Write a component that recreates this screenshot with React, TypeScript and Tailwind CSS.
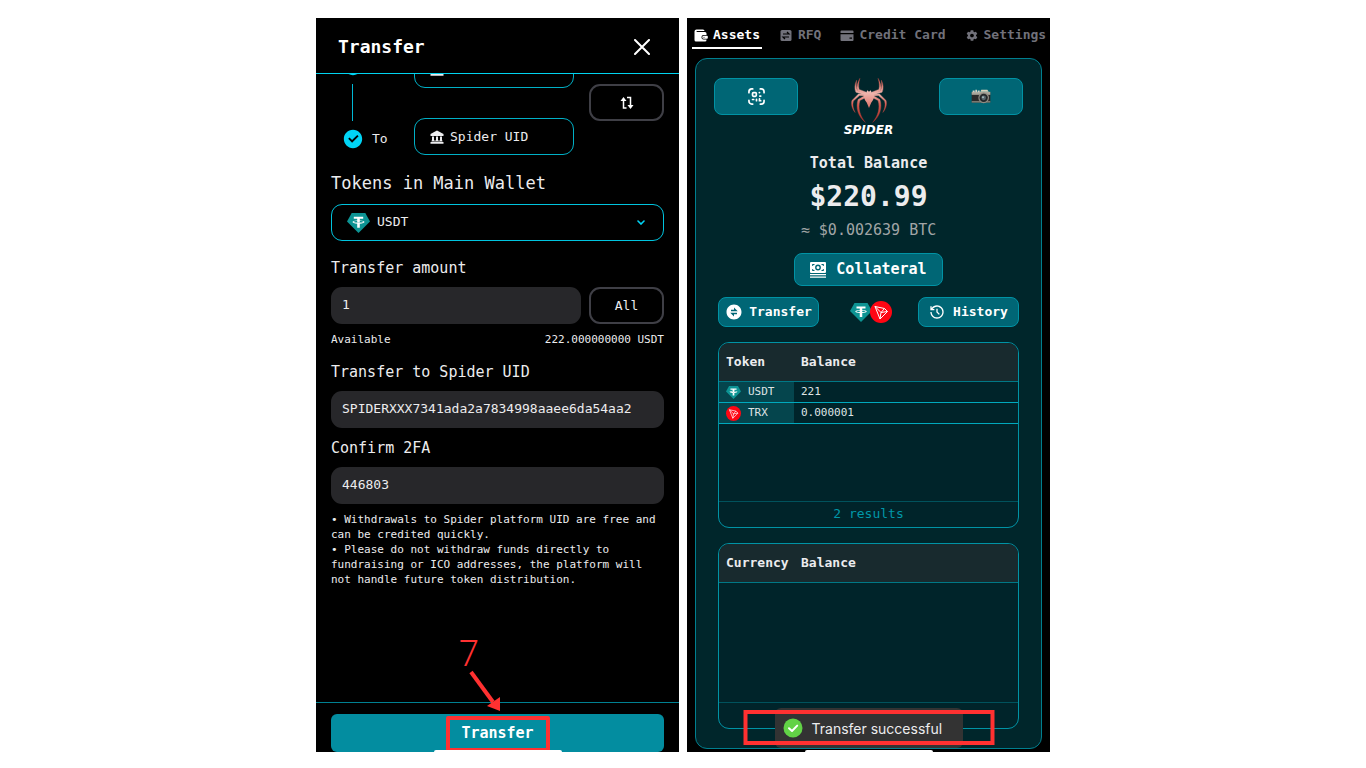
import React, { useState } from 'react';
import { RiCheckboxCircleFill, RiExchangeFill, RiHistoryLine } from 'react-icons/ri';
import { IoMdSettings } from 'react-icons/io';

type TokenRow = {
  symbol: string;
  balance: string;
  icon: React.ReactNode;
};

const UsdtIcon = ({ className }: { className?: string }) => (
  <svg viewBox="0 0 44 38" className={className} aria-hidden="true">
    <path d="M9 0h26l9 16-22 22L0 16z" fill="#0d9494" />
    <path d="M13 7h18v4h-6.500v3c5.500.4 9 1.500 9 3.100s-3.500 2.700-9 3.100V28h-5v-7.800c-5.500-.4-9-1.500-9-3.100s3.500-2.700 9-3.100v-3H13z" fill="#fff" />
    <path d="M12.500 17c1-1 3.500-1.500 7-1.700v2.500h5v-2.500c3.500.2 6 .7 7 1.700-2.500 1.500-16.500 1.500-19 0z" fill="#0d9494" />
  </svg>
);

const TrxIcon = ({ className }: { className?: string }) => (
  <svg viewBox="0 0 44 44" className={className} aria-hidden="true">
    <circle cx="22" cy="22" r="22" fill="#ff0613" />
    <g fill="none" stroke="#fff" strokeWidth="2" strokeLinejoin="round">
      <path d="M10 11l19 4 6 6-15 15z" />
      <path d="M10 11l12 12 7-8M22 23l13-2M22 23l-2 13" />
    </g>
  </svg>
);

const CloseIcon = () => (
  <svg viewBox="0 0 16 16" className="h-4 w-4" fill="none" stroke="currentColor" strokeWidth="2" strokeLinecap="round">
    <path d="M1 1l14 14M15 1L1 15" />
  </svg>
);

const BankIcon = () => (
  <svg viewBox="0 0 14 14" className="h-3.5 w-3.5" fill="currentColor" aria-hidden="true">
    <path d="M7 .5L13.500 4v2H.5V4z" />
    <path d="M2 6.500h2v4H2zM6 6.500h2v4H6zM10 6.500h2v4h-2zM1.500 10.500h11v1h-11zM.5 12h13v1.800H.5z" />
  </svg>
);

const SwapIcon = () => (
  <svg viewBox="0 0 14 14" className="h-3.5 w-3.5" fill="none" stroke="currentColor" strokeWidth="1.500">
    <path d="M3.500 3v9h3M7 1.500h3.500V11" />
    <path d="M3.500 1L6.500 5h-6zM10.500 13l-3-4h6z" fill="currentColor" stroke="none" />
  </svg>
);

const ScanIcon = () => (
  <svg viewBox="0 0 18 18" className="h-[17px] w-[17px]" fill="none" stroke="currentColor" strokeWidth="1.800" strokeLinecap="round">
    <path d="M1 5V4a3 3 0 013-3h1M13 1h1a3 3 0 013 3v1M17 13v1a3 3 0 01-3 3h-1M5 17H4a3 3 0 01-3-3v-1" />
    <rect x="4.800" y="4.800" width="4" height="4" rx="1" />
    <path d="M12 4.800h.2M12.500 8.500h1M4.800 12.200h1.200M9 12v1.500M12.200 11.500v2h1.300" />
  </svg>
);

const CashIcon = () => (
  <svg viewBox="0 0 16 16" className="h-4 w-4" fill="currentColor">
    <path fillRule="evenodd" d="M1 0h14a1 1 0 011 1v9a1 1 0 01-1 1H1a1 1 0 01-1-1V1a1 1 0 011-1zm1.200 2v2h1V3h1.300V2zm9.300 0v1h1.300v1h1V2zM2.200 7v2h2.300V8H3.200V7zm10.600 0v1h-1.300v1h2.300V7zM8 2.600a2.900 2.900 0 100 5.800 2.900 2.900 0 000-5.800zM8 4a1.500 1.500 0 110 3 1.500 1.500 0 010-3z" />
    <path d="M0 12h16v1.200H0zM0 14.500h16v1.200H0z" />
  </svg>
);

const WalletIcon = () => (
  <svg viewBox="0 0 14 14" className="h-3.5 w-3.5" fill="currentColor" aria-hidden="true">
    <path d="M2.500 1.500H9A1.500 1.500 0 0110.500 3H3a.5.5 0 000 1h8a1.500 1.500 0 011.500 1.500V7H9.500a2 2 0 00-2 2v.5a2 2 0 002 2h3V12a1.500 1.500 0 01-1.500 1.500H2A1.500 1.500 0 01.5 12V3.500a2 2 0 012-2z" />
    <path fillRule="evenodd" d="M9.700 7.800H13a.8.8 0 01.8.8V10a.8.8 0 01-.8.8H9.700a1.500 1.500 0 010-3zm.3 1a.5.5 0 100 1 .5.5 0 000-1z" />
  </svg>
);

const RfqIcon = () => (
  <svg viewBox="0 0 14 14" className="h-3.5 w-3.5" aria-hidden="true">
    <rect x="1.500" y="2" width="11" height="11" rx="1.500" fill="currentColor" />
    <path d="M4 6h6L8 4M10 9H4l2 2" fill="none" stroke="#000" strokeWidth="1.200" />
  </svg>
);

const CardIcon = () => (
  <svg viewBox="0 0 14 14" className="h-3.5 w-3.5" fill="currentColor" aria-hidden="true">
    <path d="M1.500 2.500h11a1 1 0 011 1V5H.5V3.500a1 1 0 011-1z" />
    <path fillRule="evenodd" d="M.5 6.200h13V12a1 1 0 01-1 1h-11a1 1 0 01-1-1zM9.500 9.500v1.200H12V9.500z" />
  </svg>
);

const CameraIcon = () => (
  <svg viewBox="0 0 60 44" className="h-[15px] w-5" aria-hidden="true">
    <path d="M2 9h56v31H2z" fill="#2c2b2a" />
    <path d="M2 8h56v9H2z" fill="#a9a69a" />
    <path d="M31 2h18l4 6H28z" fill="#d8d3bd" />
    <path d="M5 4h6v5H5zM13 2h5v7h-5zM20 4h6v5h-6z" fill="#d5d2c6" />
    <path d="M2 36h56v4H2z" fill="#8b887d" />
    <circle cx="38" cy="26" r="16" fill="#8f8c83" />
    <circle cx="38" cy="26" r="12.500" fill="#23282b" />
    <circle cx="38" cy="26" r="7" fill="#56656b" />
    <circle cx="36" cy="24" r="3" fill="#a5b9bd" />
  </svg>
);

const SpiderMark = () => (
  <svg viewBox="54 22 120 146" className="h-12 w-10" aria-hidden="true">
    <defs>
      <linearGradient id="legs" x1="0" y1="22" x2="0" y2="168" gradientUnits="userSpaceOnUse">
        <stop offset="0" stopColor="#c9443a" />
        <stop offset=".35" stopColor="#eeb5ad" />
        <stop offset=".6" stopColor="#d4574d" />
        <stop offset="1" stopColor="#a82c27" />
      </linearGradient>
      <linearGradient id="torso" x1="0" y1="60" x2="0" y2="122" gradientUnits="userSpaceOnUse">
        <stop offset="0" stopColor="#f3c6bf" />
        <stop offset="1" stopColor="#dc6a60" />
      </linearGradient>
    </defs>
    <g transform="translate(114 0) scale(1.18 1) translate(-114 0)">
      <g fill="url(#legs)" stroke="url(#legs)" strokeWidth="1">
        <path d="M106 76L82 63c-3-13 1-28 7-40-3 14-5 25-2 36l20 9zM122 76l24-13c3-13-1-28-7-40 3 14 5 25 2 36l-20 9z" />
        <path d="M105 78L78 68c-5-13-3-27 2-39-1 13-2 24 2 34l24 9zM123 78l27-10c5-13 3-27-2-39 1 13 2 24-2 34l-24 9z" />
        <path d="M104 80L88 79 71 97c-3 14 0 25 5 37-8-11-12-25-9-39l18-21 20 1zM124 80l16-1 17 18c3 14 0 25-5 37 8-11 12-25 9-39l-18-21-20 1z" />
        <path d="M104 86L89 95c-6 25 0 49 15 71-21-20-27-48-20-74l19-13zM124 86l15 9c6 25 0 49-15 71 21-20 27-48 20-74l-19-13z" />
      </g>
      <path d="M109 62l5 5 5-5 2 7c6 2 8 7 7 14-1 9-5 14-8 19l-6 17-6-17c-3-5-7-10-8-19-1-7 1-12 7-14z" fill="url(#torso)" />
    </g>
  </svg>
);

const tabs = [
  { label: 'Assets', icon: <WalletIcon /> },
  { label: 'RFQ', icon: <RfqIcon /> },
  { label: 'Credit Card', icon: <CardIcon /> },
  { label: 'Settings', icon: <IoMdSettings className="h-3.5 w-3.5 pt-px" /> },
];

const tokens: TokenRow[] = [
  { symbol: 'USDT', balance: '221', icon: <UsdtIcon className="h-[13px] w-[15px]" /> },
  { symbol: 'TRX', balance: '0.000001', icon: <TrxIcon className="h-[15px] w-[15px]" /> },
];

const fieldClass = 'h-[37px] w-full min-w-0 rounded-[11px] bg-[#27272a] px-[11px] pb-0.5 text-[13px] text-[#ececee] outline-none';
const tealButton = 'flex items-center justify-center border border-[#0093a5] bg-[#006675] text-white';

const HomeIndicator = () => (
  <div className="absolute bottom-0 left-1/2 h-0.5 w-32 -translate-x-1/2 rounded-t-full bg-white" />
);

const BalanceTable = ({ name, rows, footer }: { name: string; rows: TokenRow[]; footer?: string }) => (
  <section className="flex h-[186px] flex-col overflow-hidden rounded-[11px] border border-[#0093a5] bg-[#00242a]">
    <table className="w-full table-fixed border-collapse text-left">
      <thead>
        <tr className="h-[38px] border-b border-[#007886] bg-[#182a2e] text-[13px] text-[#ececee]">
          <th className="w-[75px] pl-[7px] font-bold">{name}</th>
          <th className="pl-[7px] font-bold">Balance</th>
        </tr>
      </thead>
      <tbody>
        {rows.map(row => (
          <tr key={row.symbol} className="h-[21px] border-b border-[#00a9bd] text-[11px] leading-4 text-[#dfe3e4]">
            <td className="bg-[#05454d] pt-px pl-[7px]">
              <span className="flex items-center gap-[7px]">
                {row.icon}
                {row.symbol}
              </span>
            </td>
            <td className="pt-px pl-[7px]">{row.balance}</td>
          </tr>
        ))}
      </tbody>
    </table>
    <div className="mt-auto h-[26px] border-t border-[#00525c] text-center text-[13px] leading-6 text-[#0097a8]">{footer}</div>
  </section>
);

const TransferPanel = () => {
  const [amount, setAmount] = useState('1');
  const [uid, setUid] = useState('SPIDERXXX7341ada2a7834998aaee6da54aa2');
  const [code, setCode] = useState('446803');

  return (
    <section className="relative flex flex-col overflow-hidden bg-black text-[#ececee]">
      <header className="flex h-14 shrink-0 items-center justify-between border-b border-[#00d4f0] pt-0.5 pr-[29px] pl-[22px]">
        <h1 className="text-[18px] font-bold text-white">Transfer</h1>
        <button aria-label="Close" className="text-white"><CloseIcon /></button>
      </header>

      <div className="flex-1 overflow-hidden px-[15px]">
        {/* list is scrolled, so the first step sits partly under the header */}
        <div className="-mt-6 flex">
          <div className="w-[83px] pt-[5px] pl-[11px]">
            <RiCheckboxCircleFill className="h-[22px] w-[22px] text-[#00d4f5]" />
            <div className="my-[7px] ml-2.5 h-[37px] w-px bg-[#00b8d4]" />
            <div className="flex items-center gap-2 text-[13px]">
              <RiCheckboxCircleFill className="h-[22px] w-[22px] text-[#00d4f5]" />
              To
            </div>
          </div>
          <div className="flex flex-1 flex-col gap-[30px]">
            <button aria-label="From account" className="flex h-[38px] items-center rounded-[11px] border border-[#00b0c6] pl-[15px]">
              <BankIcon />
            </button>
            <button className="flex h-[37px] items-center gap-[6px] rounded-[11px] border border-[#00b0c6] pl-[15px] text-[13px]">
              <BankIcon />
              Spider UID
            </button>
          </div>
          <button aria-label="Swap accounts" className="ml-[15px] flex h-[37px] w-[75px] items-center justify-center self-center rounded-[11px] border-2 border-[#3f3f46] text-white">
            <SwapIcon />
          </button>
        </div>

        <label htmlFor="token" className="mt-4 block text-[17px] leading-6">Tokens in Main Wallet</label>
        <div className="relative mt-[9px] flex items-center">
          <UsdtIcon className="pointer-events-none absolute left-4 h-5 w-[23px]" />
          <select id="token" className="h-[37px] w-full appearance-none rounded-[11px] border border-[#00c4de] bg-black pb-0.5 pl-[45px] text-[13px] outline-none">
            <option>USDT</option>
          </select>
          <svg viewBox="0 0 8 5" className="pointer-events-none absolute right-[19px] h-[5px] w-2" fill="none" stroke="#00d4f5" strokeWidth="1.600" strokeLinecap="round">
            <path d="M1 1l3 3 3-3" />
          </svg>
        </div>

        <label htmlFor="amount" className="mt-[15px] mb-[7px] block text-[15px] leading-6">Transfer amount</label>
        <div className="flex gap-2">
          <input id="amount" value={amount} onChange={e => setAmount(e.target.value)} className={fieldClass} />
          <button onClick={() => setAmount('222')} className="h-[37px] w-[75px] shrink-0 rounded-[11px] border-2 border-[#3f3f46] text-[13px]">All</button>
        </div>
        <div className="mt-2 flex justify-between text-[11px] leading-4">
          <span>Available</span>
          <span>222.000000000 USDT</span>
        </div>

        <label htmlFor="uid" className="mt-3 mb-[7px] block text-[15px] leading-6">Transfer to Spider UID</label>
        <input id="uid" value={uid} onChange={e => setUid(e.target.value)} className={fieldClass} />

        <label htmlFor="code" className="mt-2 mb-[7px] block text-[15px] leading-6">Confirm 2FA</label>
        <input id="code" value={code} onChange={e => setCode(e.target.value)} className={fieldClass} />

        <div className="mt-2 text-[11px] leading-[15px]">
          <p>• Withdrawals to Spider platform UID are free and can be credited quickly.</p>
          <p>• Please do not withdraw funds directly to fundraising or ICO addresses, the platform will not handle future token distribution.</p>
        </div>
      </div>

      <footer className="relative shrink-0 border-t border-[#008091] px-[15px] pt-[11px]">
        <button className="h-[38px] w-full rounded-md bg-[#038da0] text-[15px] font-bold text-white">Transfer</button>
        {/* step annotation */}
        <div className="absolute top-[13px] left-1/2 h-9 w-[104px] -translate-x-1/2 rounded-xs border-4 border-[#ff3131]" />
        <span className="absolute bottom-[74px] left-[143px] font-['Roboto'] text-[36px] leading-[48px] font-light text-[#ff3131]">7</span>
        <svg viewBox="0 0 34 42" className="absolute bottom-10 left-[152px] h-[42px] w-[34px]" aria-hidden="true">
          <path d="M3 2l22 30" stroke="#ff3131" strokeWidth="4" />
          <path d="M32 41L19 36l13-9z" fill="#ff3131" />
        </svg>
      </footer>
      <HomeIndicator />
    </section>
  );
};

const AssetsPanel = () => {
  const [active, setActive] = useState('Assets');

  return (
    <section className="relative flex flex-col overflow-hidden bg-black pb-[3px]">
      <nav className="mb-[9px] flex gap-[15px] pt-1.5 pl-[5px]">
        {tabs.map(tab => (
          <button
            key={tab.label}
            onClick={() => setActive(tab.label)}
            className={`flex shrink-0 items-center gap-[5px] border-b-2 px-0.5 pb-px text-[13px] leading-[22px] font-bold ${
              active === tab.label ? 'border-white text-white' : 'border-transparent text-[#71717a]'
            }`}
          >
            {tab.icon}
            {tab.label}
          </button>
        ))}
      </nav>

      <div className="mx-2 flex-1 rounded-xl border border-[#007f8f] bg-[#00262b] px-[22px] pt-[19px]">
        <div className="-mx-1 flex items-start justify-between">
          <button aria-label="Scan code" className={`${tealButton} h-[37px] w-[84px] rounded-lg`}><ScanIcon /></button>
          <div className="flex h-[60px] flex-col items-center">
            <SpiderMark />
            <span className="font-['DejaVu_Sans'] text-[12px] leading-[15px] font-bold text-white italic">SPIDER</span>
          </div>
          <button aria-label="Camera" className={`${tealButton} h-[37px] w-[84px] rounded-lg`}><CameraIcon /></button>
        </div>

        <div className="mt-[13px] flex flex-col items-center text-[#ececee]">
          <h2 className="text-[15px] leading-6 font-bold">Total Balance</h2>
          <p className="text-[28px] leading-[43px] font-bold">$220.99</p>
          <p className="text-[15px] leading-6 text-[#a1a5a6]">≈ $0.002639 BTC</p>
          <button className={`${tealButton} mt-[11px] h-[33px] w-[149px] gap-[10px] rounded-lg text-[15px] font-bold`}>
            <CashIcon />
            Collateral
          </button>
        </div>

        <div className="mt-[11px] flex items-center justify-between">
          <button className={`${tealButton} h-[30px] w-[101px] gap-1.5 rounded-lg text-[13px] font-bold`}>
            <RiExchangeFill className="h-[18px] w-[18px]" />
            Transfer
          </button>
          <div className="ml-1 flex items-center">
            <UsdtIcon className="h-[19px] w-[22px]" />
            <TrxIcon className="-ml-0.5 h-[22px] w-[22px]" />
          </div>
          <button className={`${tealButton} h-[30px] w-[101px] gap-2 rounded-lg text-[13px] font-bold`}>
            <RiHistoryLine className="h-4 w-4" />
            History
          </button>
        </div>

        <div className="mt-[15px] flex flex-col gap-[15px]">
          <BalanceTable name="Token" rows={tokens} footer="2 results" />
          <BalanceTable name="Currency" rows={[]} />
        </div>
      </div>

      {/* toast with its highlight frame */}
      <div role="status" className="absolute bottom-1 left-1/2 flex h-10 w-[188px] -translate-x-1/2 items-center gap-[9px] rounded-md bg-[#333333] pl-2 font-['Inter'] text-[14px] whitespace-nowrap text-[#ececee]">
        <svg viewBox="0 0 20 20" className="h-5 w-5" aria-hidden="true">
          <circle cx="10" cy="10" r="9.500" fill="#62d246" />
          <path d="M6 10.200l3 2.800 5.200-5.400" fill="none" stroke="#fff" strokeWidth="2" strokeLinecap="round" strokeLinejoin="round" />
        </svg>
        Transfer successful
      </div>
      <div className="pointer-events-none absolute bottom-[7px] left-1/2 h-[35px] w-[251px] -translate-x-1/2 border-4 border-[#ff3131]" />
      <HomeIndicator />
    </section>
  );
};

const App: React.FC = () => {
  return (
    <main className="flex min-h-screen justify-center bg-white pt-[18px] pb-4 font-['DejaVu_Sans_Mono',monospace]">
      <div className="grid w-full max-w-[734px] grid-cols-2 gap-2">
        <TransferPanel />
        <AssetsPanel />
      </div>
    </main>
  );
};

export default App;
